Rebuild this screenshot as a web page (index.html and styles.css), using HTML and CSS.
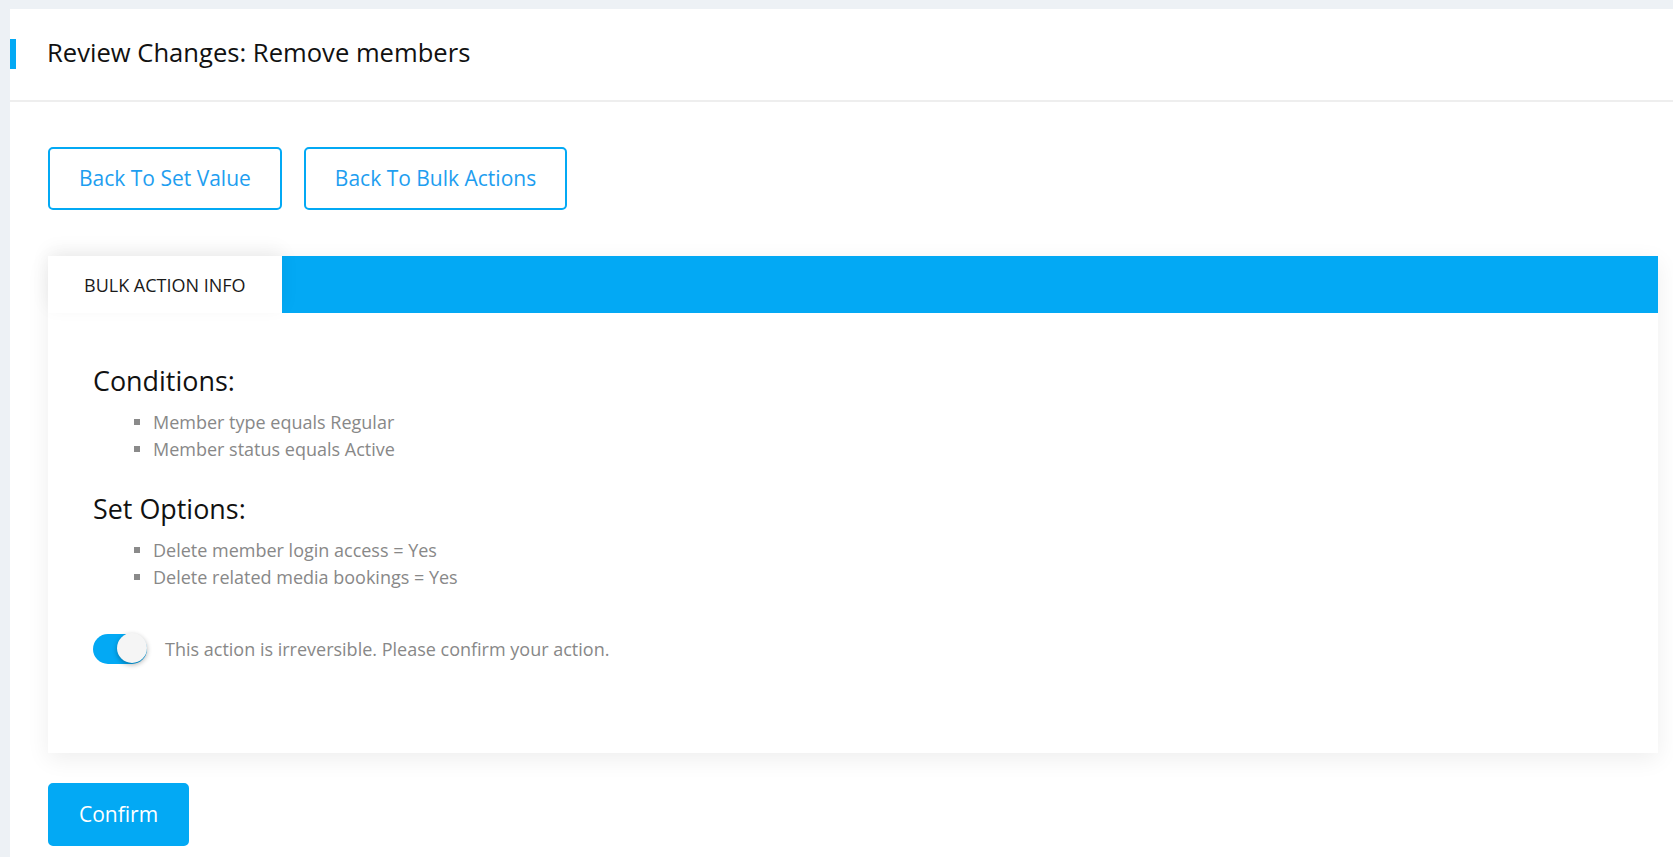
FILE: index.html
```html
<!DOCTYPE html>
<html lang="en">
<head>
<meta charset="utf-8">
<title>Review Changes: Remove members</title>
<link rel="stylesheet" href="styles.css">
</head>
<body>
<div class="page">
  <header class="page-header">
    <h1 class="page-title">Review Changes: Remove members</h1>
  </header>
  <main class="content">
    <div class="nav-buttons">
      <button class="btn btn-outline" type="button">Back To Set Value</button>
      <button class="btn btn-outline" type="button">Back To Bulk Actions</button>
    </div>
    <section class="card">
      <div class="tabs">
        <div class="tab tab-active">BULK ACTION INFO</div>
      </div>
      <div class="card-body">
        <h2 class="section-title">Conditions:</h2>
        <ul class="info-list">
          <li>Member type equals Regular</li>
          <li>Member status equals Active</li>
        </ul>
        <h2 class="section-title">Set Options:</h2>
        <ul class="info-list">
          <li>Delete member login access = Yes</li>
          <li>Delete related media bookings = Yes</li>
        </ul>
        <label class="confirm-row">
          <span class="switch"><span class="switch-knob"></span></span>
          <span class="confirm-text">This action is irreversible. Please confirm your action.</span>
        </label>
      </div>
    </section>
    <button class="btn btn-primary" type="button">Confirm</button>
  </main>
</div>
</body>
</html>
```

FILE: styles.css
```css
* {
  box-sizing: border-box;
}

html, body {
  margin: 0;
  padding: 0;
}

body {
  background: #edf1f5;
  font-family: "Open Sans", "Noto Sans", "Liberation Sans", sans-serif;
  color: #111;
}

.page {
  margin: 9px 0 0 10px;
  background: #fff;
  min-height: calc(100vh - 9px);
}

.page-header {
  height: 93px;
  border-bottom: 2px solid #eeeeee;
  display: flex;
  align-items: center;
}

.page-header::before {
  content: "";
  display: block;
  width: 6px;
  height: 30px;
  background: #03a9f4;
  margin-right: 31px;
  margin-top: -1px;
}

.page-title {
  margin: 0 0 4px 0;
  font-size: 25.6px;
  font-weight: 400;
  color: #111;
  line-height: 1.3;
}

.content {
  padding: 45px 15px 11px 38px;
}

.nav-buttons {
  display: flex;
  gap: 22px;
  margin-bottom: 46px;
}

.btn {
  font-family: inherit;
  font-size: 21px;
  height: 63px;
  padding: 0 29px;
  border-radius: 5px;
  border: 2px solid #03a9f4;
  cursor: pointer;
  line-height: 1;
}

.btn-outline {
  background: #fff;
  color: #1e9ef0;
}

.btn-primary {
  background: #03a9f4;
  color: #fff;
  display: block;
  padding-bottom: 1px;
}

.card {
  background: #fff;
  box-shadow: 0 6px 22px rgba(0, 0, 0, 0.07);
  margin-bottom: 30px;
}

.tabs {
  display: flex;
  height: 57px;
  background: #03a9f4;
}

.tab {
  display: flex;
  align-items: center;
  padding: 0 36px;
  font-size: 18px;
  color: #1a1a1a;
}

.tab-active {
  background: #fff;
  box-shadow: 0 -6px 18px rgba(0, 0, 0, 0.06);
}

.card-body {
  padding: 52px 45px 89px 45px;
}

.section-title {
  margin: 0 0 12px 0;
  font-size: 26.9px;
  font-weight: 400;
  line-height: 32px;
  color: #111;
}

.info-list {
  list-style: none;
  margin: 0 0 31px 0;
  padding: 0 0 0 41px;
}

.info-list li {
  display: flex;
  align-items: center;
  font-size: 18px;
  line-height: 26.6px;
  color: #888888;
}

.info-list li::before {
  content: "";
  width: 6px;
  height: 6px;
  background: #8a8a8a;
  margin-right: 13px;
  flex: none;
}

.confirm-row {
  display: flex;
  align-items: center;
  gap: 18px;
  margin-top: 44px;
}

.switch {
  position: relative;
  width: 54px;
  height: 30px;
  border-radius: 15px;
  background: #03a9f4;
  flex: none;
}

.switch-knob {
  position: absolute;
  top: -1px;
  right: 0;
  width: 30px;
  height: 30px;
  border-radius: 50%;
  background: #f5f5f5;
  box-shadow: 0 2px 5px rgba(0, 0, 0, 0.3);
}

.confirm-text {
  font-size: 18px;
  color: #888888;
}
```
